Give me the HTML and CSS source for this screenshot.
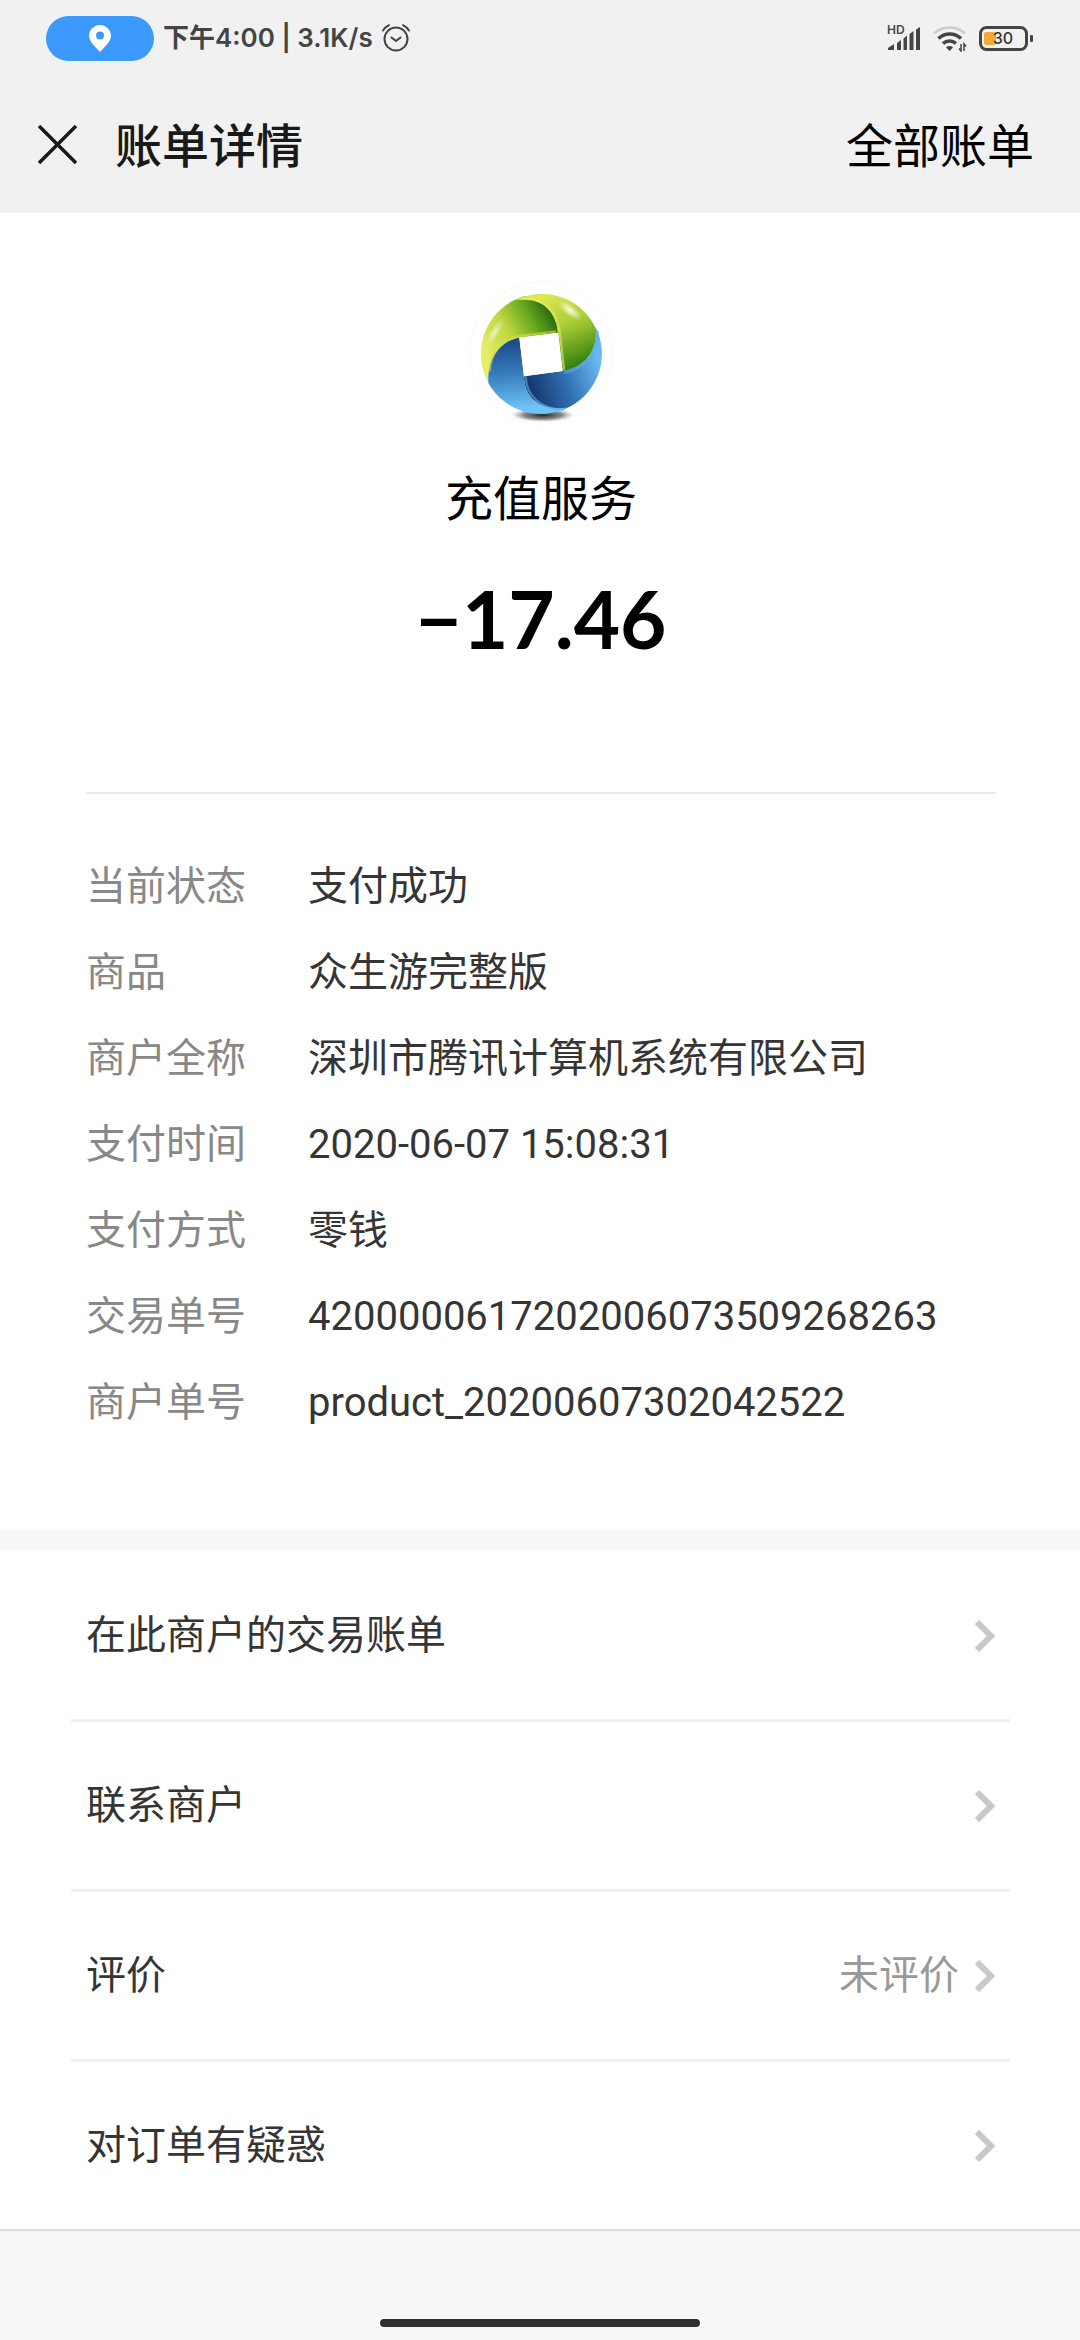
FILE: index.html
```
<!DOCTYPE html>
<html lang="zh-CN">
<head>
  <meta charset="UTF-8">
  <meta name="viewport" content="width=device-width, initial-scale=1">
  <title>账单详情</title>
  <link rel="stylesheet" href="styles.css">
</head>
<body>
  <header class="top">
    <!-- phone status bar -->
    <div class="status-bar">
      <div class="status-left">
        <span class="location-pill">
          <svg width="22" height="27" viewBox="0 0 22 27"><path fill="#fff" fill-rule="evenodd" d="M11 0C5 0 0 5 0 10.600c0 6.400 6.500 11.400 11 16.400 4.500-5 11-10 11-16.400C22 5 17 0 11 0zm0 6.500a4 4 0 1 1 0 8 4 4 0 0 1 0-8z"/></svg>
        </span>
        <span>下午4:00 | 3.1K/s</span>
        <svg class="alarm" width="28" height="28" viewBox="0 0 28 28" fill="none" stroke="#444" stroke-width="2" stroke-linecap="round">
          <circle cx="14" cy="15" r="11.500"/>
          <path d="M9.500 13.500l4.500 3.500 4.500-3.500M1 6.500C2.500 4 4.500 2.500 7 1.200M27 6.500c-1.500-2.500-3.500-4-6-5.300"/>
        </svg>
      </div>
      <div class="status-right">
        <svg width="36" height="36" viewBox="-2 -6 36 36" fill="#444">
          <text class="hd" x="0" y="8">HD</text>
          <path d="M1 24v-2l6-4v6zM10 17l4-3v10h-4zM16.500 12.500l3.500-3V24h-3.500zM22.500 8l4-3v19h-4zM29 3.500L33 1v23h-4z"/>
        </svg>
        <svg width="34" height="27" viewBox="0 0 34 27" fill="none">
          <path stroke="#ccc" stroke-width="2.500" d="M1 8.500a23 23 0 0 1 31 0"/>
          <path stroke="#444" stroke-width="3.500" d="M5.500 13.500a16 16 0 0 1 22.500 0M10 18.500a10 10 0 0 1 13 0"/>
          <path fill="#444" d="M13 22.500a5 5 0 0 1 7 0L16.500 26z"/>
          <path stroke="#444" stroke-width="1.500" d="M28 19v7l-2-2.500M31 26v-7l2 2.500"/>
        </svg>
        <svg width="54" height="25" viewBox="0 0 54 25">
          <rect x="1.500" y="1.500" width="46" height="22" rx="6" fill="none" stroke="#444" stroke-width="3"/>
          <rect x="5" y="6" width="12" height="13" rx="2" fill="#f3ab37"/>
          <rect x="51" y="9" width="3" height="7" rx="1" fill="#444"/>
          <text class="battery-level" x="24" y="18" text-anchor="middle">30</text>
        </svg>
      </div>
    </div>
    <nav class="nav">
      <button class="close-btn" aria-label="关闭">
        <svg width="39" height="39" viewBox="0 0 39 39" stroke="#191919" stroke-width="3.500"><path d="M1 1l37 37M38 1L1 38"/></svg>
      </button>
      <h1>账单详情</h1>
      <a href="#" class="all-bills">全部账单</a>
    </nav>
  </header>

  <main>
    <section class="bill">
      <div class="summary">
        <svg class="logo" width="144" height="144" viewBox="87 62 432 432">
          <defs>
            <linearGradient id="topLeft" gradientUnits="userSpaceOnUse" x1="135" y1="280" x2="345" y2="165">
              <stop offset="0" stop-color="#e6ee66"/>
              <stop offset="0.400" stop-color="#bdd540"/>
              <stop offset="0.700" stop-color="#6aaa1f"/>
              <stop offset="1" stop-color="#23660d"/>
            </linearGradient>
            <linearGradient id="topRight" gradientUnits="userSpaceOnUse" x1="330" y1="100" x2="420" y2="320">
              <stop offset="0" stop-color="#dfe84f"/>
              <stop offset="0.450" stop-color="#a9cb35"/>
              <stop offset="1" stop-color="#2c7d0c"/>
            </linearGradient>
            <linearGradient id="bottomRight" gradientUnits="userSpaceOnUse" x1="270" y1="375" x2="475" y2="310">
              <stop offset="0" stop-color="#143a70"/>
              <stop offset="0.500" stop-color="#316fb2"/>
              <stop offset="1" stop-color="#67b8ee"/>
            </linearGradient>
            <linearGradient id="bottomLeft" gradientUnits="userSpaceOnUse" x1="210" y1="240" x2="225" y2="445">
              <stop offset="0" stop-color="#1c4a86"/>
              <stop offset="0.500" stop-color="#377ebd"/>
              <stop offset="1" stop-color="#6fc3f5"/>
            </linearGradient>
            <radialGradient id="shadow">
              <stop offset="0" stop-color="#222"/>
              <stop offset="0.600" stop-color="#555" stop-opacity="0.700"/>
              <stop offset="1" stop-color="#999" stop-opacity="0"/>
            </radialGradient>
            <radialGradient id="shine">
              <stop offset="0" stop-color="#fff" stop-opacity="0.900"/>
              <stop offset="1" stop-color="#fff" stop-opacity="0"/>
            </radialGradient>
          </defs>
          <circle cx="303" cy="278" r="214" fill="#fff" stroke="#f4f4f4" stroke-width="2"/>
          <ellipse cx="308" cy="464" rx="95" ry="21" fill="url(#shadow)"/>
          <path fill="url(#topLeft)" d="M145 368A180 180 0 0 1 255 107C310 112 350 150 354 217L238 232C190 240 142 280 145 368z"/>
          <path fill="url(#topRight)" d="M225 119A180 180 0 0 1 468 205C474 275 432 322 368 332L354 217C346 150 305 108 225 119z"/>
          <path fill="url(#bottomRight)" d="M467 200A180 180 0 0 1 370 448C300 455 252 410 252 348L368 332C432 322 474 275 467 200z"/>
          <path fill="url(#bottomLeft)" d="M145 368C142 280 190 240 238 232L252 348C252 410 300 455 385 441A180 180 0 0 1 145 368z"/>
          <g fill="none" stroke-width="7" stroke-linecap="round" opacity="0.600">
            <path stroke="#e6ee6e" d="M245 116C315 110 352 156 359 215L372 325"/>
            <path stroke="#d5df4c" d="M149 330C153 272 192 235 240 227L345 214"/>
            <path stroke="#5fb0ea" d="M375 337C432 326 472 280 473 215M245 240L257 350C260 408 305 448 370 447"/>
          </g>
          <ellipse cx="390" cy="150" rx="42" ry="17" fill="url(#shine)" transform="rotate(38 390 150)"/>
          <ellipse cx="165" cy="215" rx="48" ry="14" fill="url(#shine)" opacity="0.700" transform="rotate(-58 165 215)"/>
          <path fill="#fff" d="M238 232L354 217 368 332 252 348z"/>
        </svg>
        <h2>充值服务</h2>
        <p class="amount">−17.46</p>
      </div>

      <dl class="details">
        <dt>当前状态</dt>
        <dd>支付成功</dd>
        <dt>商品</dt>
        <dd>众生游完整版</dd>
        <dt>商户全称</dt>
        <dd>深圳市腾讯计算机系统有限公司</dd>
        <dt>支付时间</dt>
        <dd>2020-06-07 15:08:31</dd>
        <dt>支付方式</dt>
        <dd>零钱</dd>
        <dt>交易单号</dt>
        <dd>4200000617202006073509268263</dd>
        <dt>商户单号</dt>
        <dd>product_20200607302042522</dd>
      </dl>
    </section>

    <ul class="links">
      <li>
        <a href="#">在此商户的交易账单
          <svg class="arrow" width="21" height="32" viewBox="0 0 21 32"><path d="M2 2l14 14L2 30"/></svg>
        </a>
      </li>
      <li>
        <a href="#">联系商户
          <svg class="arrow" width="21" height="32" viewBox="0 0 21 32"><path d="M2 2l14 14L2 30"/></svg>
        </a>
      </li>
      <li>
        <a href="#">评价 <span class="hint">未评价</span>
          <svg class="arrow" width="21" height="32" viewBox="0 0 21 32"><path d="M2 2l14 14L2 30"/></svg>
        </a>
      </li>
      <li>
        <a href="#">对订单有疑惑
          <svg class="arrow" width="21" height="32" viewBox="0 0 21 32"><path d="M2 2l14 14L2 30"/></svg>
        </a>
      </li>
    </ul>
  </main>

  <footer>
    <div class="home-bar"></div>
  </footer>
</body>
</html>
```
FILE: styles.css
```
* {
  margin: 0;
  padding: 0;
  box-sizing: border-box;
}
body {
  min-height: 100vh;
  display: flex;
  flex-direction: column;
  font-family: Roboto, "Noto Sans CJK SC", sans-serif;
  font-size: 40px;
  line-height: 60px;
  color: #353535;
  background: #f7f7f7;
}
a {
  color: inherit;
  text-decoration: none;
}
svg {
  display: block;
  flex: none;
}

/* status bar + title */
.top {
  background: #f1f1f1;
}
.status-bar {
  height: 76px;
  padding: 0 47px 0 46px;
  display: flex;
  justify-content: space-between;
  align-items: center;
  font-family: Inter, "Noto Sans CJK SC", sans-serif;
  font-size: 26px;
  font-weight: 600;
  color: #444;
}
.status-left {
  display: flex;
  align-items: center;
  gap: 9px;
}
.status-right {
  display: flex;
  align-items: center;
  gap: 12px;
}
.location-pill {
  width: 108px;
  height: 45px;
  border-radius: 23px;
  background: #3b99fc;
  display: flex;
  align-items: center;
  justify-content: center;
}
.hd {
  font-size: 12px;
  line-height: 12px;
}
.battery-level {
  font-size: 16px;
  font-weight: 500;
  fill: #333;
}
.nav {
  height: 137px;
  padding: 0 46px 0 38px;
  display: flex;
  align-items: center;
}
.close-btn {
  border: none;
  background: none;
  margin-right: 38px;
}
.nav h1,
.nav a {
  padding-top: 4px;
  font-size: 47px;
}
.nav h1 {
  font-weight: 500;
  color: #191919;
}
.all-bills {
  margin-left: auto;
  color: #000;
}

/* bill */
.bill {
  padding: 68px 84px 97px 86px;
  background: #fff;
}
.summary {
  display: flex;
  flex-direction: column;
  align-items: center;
  padding-bottom: 124px;
  border-bottom: 2px solid #e8e8e8;
}
.summary h2 {
  margin-top: 45px;
  font-size: 48px;
  font-weight: 400;
  color: #000;
}
.amount {
  margin-top: 38px;
  font-family: Lato, sans-serif;
  font-size: 80px;
  font-weight: 700;
  line-height: 100px;
  color: #000;
}
.details {
  display: grid;
  grid-template-columns: 222px 1fr;
  row-gap: 26px;
  padding-top: 63px;
}
.details dt {
  color: #888;
}

/* links */
.links {
  list-style: none;
  margin-top: 20px;
  padding: 2px 70px 0 71px;
  background: #fff;
  border-bottom: 2px solid #ddd;
}
.links li + li {
  border-top: 3px solid #f0f0f0;
}
.links a {
  height: 167px;
  padding: 0 14px 0 15px;
  display: flex;
  align-items: center;
}
.hint {
  margin-left: auto;
  color: #999;
}
.arrow {
  margin-left: auto;
  fill: none;
  stroke: #c7c7cc;
  stroke-width: 6;
}
.hint + .arrow {
  margin-left: 16px;
}

footer {
  margin-top: auto;
  padding: 13px 0;
}
.home-bar {
  width: 30%;
  max-width: 320px;
  height: 8px;
  margin: 0 auto;
  border-radius: 4px;
  background: #303030;
}
```
